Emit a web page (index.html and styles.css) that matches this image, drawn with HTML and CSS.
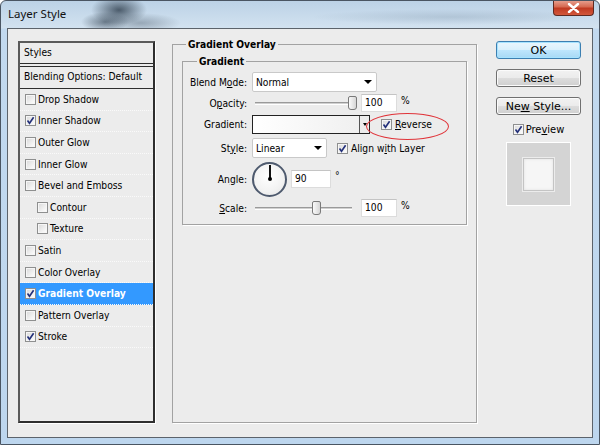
FILE: index.html
```html
<!DOCTYPE html>
<html lang="en">
<head>
    <meta charset="UTF-8">
    <title>Layer Style</title>
    <link rel="stylesheet" href="styles.css">
</head>
<body>
    <div class="window">
        <!-- Title bar -->
        <div class="titlebar">
            <span class="title">Layer Style</span>
            <span class="close">
                <svg width="13" height="10" viewBox="0 0 13 10"><path d="M2 1 L11 9 M11 1 L2 9" stroke="#fff" stroke-width="2.4" stroke-linecap="round"/></svg>
            </span>
        </div>

        <div class="client">
            <!-- Styles list -->
            <div class="styles-panel">
                <div class="panel-head">Styles</div>
                <div class="panel-blend">Blending Options: Default</div>
                <ul class="fx-list">
                    <li><span class="cb"></span>Drop Shadow</li>
                    <li><span class="cb on"><svg width="9" height="9" viewBox="0 0 9 9"><path d="M1.5 4.5 L3.5 7.3 L7.6 1.2" fill="none" stroke="#23307a" stroke-width="1.6"/></svg></span>Inner Shadow</li>
                    <li><span class="cb"></span>Outer Glow</li>
                    <li><span class="cb"></span>Inner Glow</li>
                    <li><span class="cb"></span>Bevel and Emboss</li>
                    <li class="sub"><span class="cb"></span>Contour</li>
                    <li class="sub"><span class="cb"></span>Texture</li>
                    <li><span class="cb"></span>Satin</li>
                    <li><span class="cb"></span>Color Overlay</li>
                    <li class="selected"><span class="cb on"><svg width="9" height="9" viewBox="0 0 9 9"><path d="M1.5 4.5 L3.5 7.3 L7.6 1.2" fill="none" stroke="#23307a" stroke-width="1.6"/></svg></span>Gradient Overlay</li>
                    <li><span class="cb"></span>Pattern Overlay</li>
                    <li><span class="cb on"><svg width="9" height="9" viewBox="0 0 9 9"><path d="M1.5 4.5 L3.5 7.3 L7.6 1.2" fill="none" stroke="#23307a" stroke-width="1.6"/></svg></span>Stroke</li>
                </ul>
            </div>

            <!-- Settings -->
            <fieldset class="group outer">
                <legend>Gradient Overlay</legend>
                <fieldset class="group inner">
                    <legend>Gradient</legend>

                    <div class="row r-blend">
                        <span class="lbl">Blend M<u>o</u>de:</span>
                        <div class="select w-blend"><span>Normal</span><i class="arrow"></i></div>
                    </div>

                    <div class="row r-opacity">
                        <span class="lbl">O<u>p</u>acity:</span>
                        <div class="slider"><div class="track"></div><div class="thumb" style="left: 96px"></div></div>
                        <div class="num">100</div>
                        <span class="unit">%</span>
                    </div>

                    <div class="row r-gradient">
                        <span class="lbl">Gradient:</span>
                        <div class="gradient-box"><div class="swatch"></div><div class="drop"><i class="arrow small"></i></div></div>
                        <span class="cb on chk-reverse"><svg width="9" height="9" viewBox="0 0 9 9"><path d="M1.5 4.5 L3.5 7.3 L7.6 1.2" fill="none" stroke="#23307a" stroke-width="1.6"/></svg></span>
                        <span class="opt"><u>R</u>everse</span>
                    </div>

                    <div class="row r-style">
                        <span class="lbl">St<u>y</u>le:</span>
                        <div class="select w-style"><span>Linear</span><i class="arrow"></i></div>
                        <span class="cb on chk-align"><svg width="9" height="9" viewBox="0 0 9 9"><path d="M1.5 4.5 L3.5 7.3 L7.6 1.2" fill="none" stroke="#23307a" stroke-width="1.6"/></svg></span>
                        <span class="opt">Align w<u>i</u>th Layer</span>
                    </div>

                    <div class="row r-angle">
                        <span class="lbl">An<u>g</u>le:</span>
                        <div class="dial"><div class="hand"></div><div class="pin"></div></div>
                        <div class="num wide">90</div>
                        <span class="deg">°</span>
                    </div>

                    <div class="row r-scale">
                        <span class="lbl"><u>S</u>cale:</span>
                        <div class="slider"><div class="track"></div><div class="thumb" style="left: 60px"></div></div>
                        <div class="num">100</div>
                        <span class="unit">%</span>
                    </div>
                </fieldset>
            </fieldset>

            <!-- Buttons -->
            <div class="buttons">
                <button class="btn default">OK</button>
                <button class="btn">Reset</button>
                <button class="btn">Ne<u>w</u> Style...</button>
                <div class="preview-check">
                    <span class="cb on"><svg width="9" height="9" viewBox="0 0 9 9"><path d="M1.5 4.5 L3.5 7.3 L7.6 1.2" fill="none" stroke="#23307a" stroke-width="1.6"/></svg></span>
                    <span>Pre<u>v</u>iew</span>
                </div>
                <div class="preview"><div class="preview-swatch"></div></div>
            </div>
        </div>

        <!-- red annotation ring -->
        <div class="callout"></div>
    </div>
</body>
</html>
```

FILE: styles.css
```css
body {
    margin: 0;
    background: #ffffff;
    font-family: "DejaVu Sans Condensed", "Liberation Sans", sans-serif;
    font-size: 10.2px;
    color: #000;
}
.window {
    position: relative;
    box-sizing: border-box;
    width: 600px;
    height: 445px;
    border: 1px solid #4a5562;
    border-radius: 6px 6px 0 0;
    /* glass frame with the blurred desktop behind it */
    background:
        radial-gradient(ellipse 28px 15px at 118px 9px, rgba(45, 60, 75, 0.8), rgba(45, 60, 75, 0) 100%),
        radial-gradient(ellipse 24px 10px at 104px 21px, rgba(45, 60, 75, 0.6), rgba(45, 60, 75, 0) 100%),
        radial-gradient(ellipse 40px 10px at 140px 22px, rgba(70, 85, 100, 0.4), rgba(70, 85, 100, 0) 100%),
        radial-gradient(ellipse 140px 8px at 450px 16px, rgba(70, 95, 120, 0.18), rgba(70, 95, 120, 0) 100%),
        linear-gradient(to bottom, #bcd2e6 0px, #d2e2f0 27px, #c2d9ef 28px, #bdd6ee 100%);
    overflow: hidden;
}
.titlebar {
    height: 27px;
    display: flex;
    justify-content: space-between;
    align-items: flex-start;
}
.title {
    font-family: "Noto Sans", sans-serif;
    font-size: 11.5px;
    color: #111;
    padding: 5px 0 0 7px;
}
.close {
    width: 41px;
    height: 16px;
    margin: -1px 5px 0 0;
    box-sizing: border-box;
    border: 1px solid #5e2a22;
    border-top: none;
    border-radius: 0 0 4px 4px;
    background: linear-gradient(to bottom, #e8a595 0%, #d66a52 45%, #c03a22 55%, #d2583c 100%);
    display: flex;
    align-items: center;
    justify-content: center;
}
.client {
    box-sizing: border-box;
    height: 410px;
    margin: 0 6px;
    border: 1px solid #5c636b;
    background: #ececec;
    display: flex;
    align-items: flex-start;
    padding: 12px 0 0 10px;
}

/* left styles list */
.styles-panel {
    box-sizing: border-box;
    width: 137px;
    height: 382px;
    border: 2px solid;
    border-color: #5a5a5a #2e2e2e #2e2e2e #5a5a5a;
    box-shadow: 1px 1px 0 #fff;
}
.panel-head {
    height: 20px;
    line-height: 19px;
    padding-left: 4px;
    border-bottom: 1px solid #2e2e2e;
    margin-bottom: 2px;
}
.panel-blend {
    height: 21px;
    line-height: 20px;
    padding-left: 4px;
    border-top: 1px solid #2e2e2e;
    border-bottom: 1px solid #2e2e2e;
}
.fx-list {
    list-style: none;
    margin: 0;
    padding: 0;
}
.fx-list li {
    box-sizing: border-box;
    height: 21.6px;
    display: flex;
    align-items: center;
    padding-left: 5px;
    border-bottom: 1px dotted #fafafa;
}
.fx-list li.sub {
    padding-left: 17px;
}
.fx-list li.selected {
    background: #3399ff;
    color: #fff;
    font-weight: bold;
}
.fx-list .cb {
    margin-right: 2px;
}
.cb {
    box-sizing: border-box;
    width: 11px;
    height: 11px;
    flex: none;
    border: 1px solid #8e8f8f;
    background: linear-gradient(135deg, #d8d8d8 0%, #f4f4f4 70%, #ffffff 100%);
    box-shadow: inset 0 0 0 1px #f6f6f6;
    display: inline-flex;
    align-items: center;
    justify-content: center;
}

/* group boxes */
.group {
    margin: 0;
    border: 1px solid #a2a2a2;
    box-shadow: 1px 1px 0 #fff;
}
.group legend {
    font-weight: bold;
    padding: 0 2px;
    line-height: 13px;
}
.outer {
    box-sizing: border-box;
    width: 305px;
    height: 385px;
    margin: -3px 0 0 17px;
    padding: 0 9px;
}
.outer > legend {
    margin-left: 4px;
}
.inner {
    box-sizing: border-box;
    height: 170px;
    margin-top: 4px;
    padding: 4px 0 0 0;
}
.inner > legend {
    margin-left: 14px;
}
.row {
    display: flex;
    align-items: center;
    height: 20px;
}
.r-opacity, .r-gradient, .r-scale {
    margin-top: 1px;
}
.r-style {
    margin-top: 4px;
}
.r-angle {
    height: 36px;
    margin-top: 3px;
}
.lbl {
    width: 64px;
    margin-right: 5px;
    text-align: right;
}
.select {
    box-sizing: border-box;
    height: 20px;
    border: 1px solid #c9c9c9;
    border-radius: 2px;
    background: #fff;
    display: flex;
    align-items: center;
    justify-content: space-between;
    padding: 0 4px 0 3px;
}
.w-blend { width: 125px; }
.w-style { width: 75px; }
.arrow {
    width: 0;
    height: 0;
    border-left: 4px solid transparent;
    border-right: 4px solid transparent;
    border-top: 4px solid #000;
}
.arrow.small {
    border-left-width: 2.5px;
    border-right-width: 2.5px;
    border-top-width: 3px;
}
.slider {
    position: relative;
    width: 104px;
    height: 16px;
    margin-right: 5px;
}
.track {
    position: absolute;
    left: 3px;
    right: 4px;
    top: 7px;
    height: 1px;
    border-top: 1px solid #9a9a9a;
    border-bottom: 1px solid #fff;
    background: #d0d0d0;
}
.thumb {
    position: absolute;
    top: 1px;
    width: 7px;
    height: 12px;
    border: 1px solid #7a7a7a;
    border-radius: 2px 2px 3px 3px;
    background: linear-gradient(to right, #fafafa, #d6d6d6);
}
.num {
    box-sizing: border-box;
    width: 36px;
    height: 18px;
    line-height: 16px;
    padding-left: 3px;
    background: #fff;
    border: 1px solid #dcdcdc;
    border-top-color: #c4c4c4;
}
.num.wide {
    width: 40px;
    margin-left: 4px;
}
.unit {
    margin: -6px 0 0 4px;
}
.deg {
    margin: -8px 0 0 4px;
}
.gradient-box {
    box-sizing: border-box;
    width: 118px;
    height: 19px;
    border: 1px solid #222;
    display: flex;
    background: #fff;
}
.swatch {
    flex: 1;
    border-right: 1px solid #555;
    background: linear-gradient(to right, #ffffff, #f0f0f0);
}
.drop {
    width: 9px;
    background: #ececec;
    display: flex;
    align-items: center;
    justify-content: center;
}
.chk-reverse {
    margin-left: 11px;
}
.chk-align {
    margin-left: 10px;
}
.opt {
    margin-left: 3px;
}
.dial {
    position: relative;
    box-sizing: border-box;
    width: 35px;
    height: 35px;
    border: 2px solid #4e5a6e;
    border-radius: 50%;
    background: radial-gradient(circle at 45% 40%, #ffffff 0%, #f2f2f2 60%, #e2e2e2 100%);
}
.hand {
    position: absolute;
    left: 14.5px;
    top: 1px;
    width: 2px;
    height: 14px;
    background: #111;
}
.pin {
    position: absolute;
    left: 13.5px;
    top: 13.5px;
    width: 4px;
    height: 4px;
    border-radius: 50%;
    background: #000;
}

/* buttons column */
.buttons {
    width: 85px;
    margin-left: 19px;
    display: flex;
    flex-direction: column;
    align-items: center;
}
.btn {
    box-sizing: border-box;
    width: 85px;
    height: 18px;
    margin-bottom: 10px;
    padding: 0;
    font-family: "DejaVu Sans", "Liberation Sans", sans-serif;
    font-size: 11px;
    color: #000;
    border: 1px solid #707070;
    border-radius: 3px;
    background: linear-gradient(to bottom, #f2f2f2 0%, #ebebeb 49%, #dddddd 50%, #cfcfcf 100%);
    box-shadow: inset 0 0 0 1px #fbfbfb;
}
.btn.default {
    border-color: #3c7fb1;
    background: linear-gradient(to bottom, #eaf6fd 0%, #d9f0fc 49%, #bee6fd 50%, #a7d9f5 100%);
    box-shadow: inset 0 0 0 1px #a6e3ff;
}
.preview-check {
    display: flex;
    align-items: center;
    gap: 2px;
    margin-top: -2px;
    font-size: 11px;
}
.preview {
    box-sizing: border-box;
    width: 65px;
    height: 64px;
    margin-top: 6px;
    border: 1px solid #fff;
    background-color: #d8d8d8;
    background-image: radial-gradient(#cfcfcf 0.6px, transparent 0.8px);
    background-size: 2px 2px;
    display: flex;
    align-items: center;
    justify-content: center;
}
.preview-swatch {
    box-sizing: border-box;
    width: 31px;
    height: 33px;
    border: 1px solid #c4c4c4;
    background: #f6f6f6;
    box-shadow: inset 0 0 3px #e0e0e0, 0 0 0 1px #ececec;
}

/* red annotation ellipse */
.callout {
    position: absolute;
    left: 365px;
    top: 112px;
    width: 81px;
    height: 25px;
    border: 1px solid #e0343a;
    border-radius: 50%;
}
```
